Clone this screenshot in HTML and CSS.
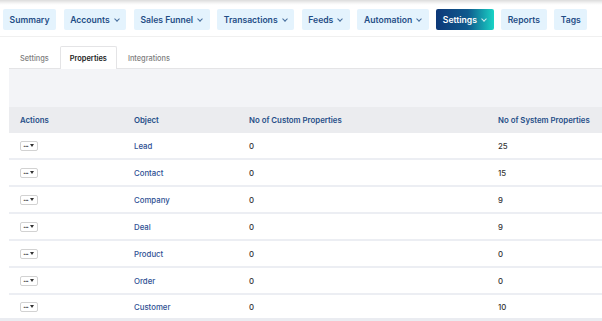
FILE: index.html
```html
<!DOCTYPE html>
<html lang="en">

<head>
    <meta charset="UTF-8">
    <meta name="viewport" content="width=device-width, initial-scale=1.0">
    <title>Settings - Properties</title>
    <link rel="stylesheet" href="styles.css">
</head>

<body>
    <!-- Main navigation -->
    <nav class="top-nav">
        <a class="nav-btn">Summary</a>
        <a class="nav-btn">Accounts <span class="chev"></span></a>
        <a class="nav-btn">Sales Funnel <span class="chev"></span></a>
        <a class="nav-btn">Transactions <span class="chev"></span></a>
        <a class="nav-btn">Feeds <span class="chev"></span></a>
        <a class="nav-btn">Automation <span class="chev"></span></a>
        <a class="nav-btn active">Settings <span class="chev"></span></a>
        <a class="nav-btn">Reports</a>
        <a class="nav-btn">Tags</a>
    </nav>

    <div class="content">
        <div class="tabs">
            <a class="tab">Settings</a>
            <a class="tab current">Properties</a>
            <a class="tab">Integrations</a>
        </div>

        <div class="toolbar"></div>

        <table class="props">
            <thead>
                <tr>
                    <th class="col-actions">Actions</th>
                    <th class="col-object">Object</th>
                    <th class="col-custom">No of Custom Properties</th>
                    <th>No of System Properties</th>
                </tr>
            </thead>
            <tbody>
                <tr>
                    <td><span class="act-btn"><span class="dots">&middot;&middot;&middot;</span><span class="caret"></span></span></td>
                    <td class="obj">Lead</td>
                    <td>0</td>
                    <td>25</td>
                </tr>
                <tr>
                    <td><span class="act-btn"><span class="dots">&middot;&middot;&middot;</span><span class="caret"></span></span></td>
                    <td class="obj">Contact</td>
                    <td>0</td>
                    <td>15</td>
                </tr>
                <tr>
                    <td><span class="act-btn"><span class="dots">&middot;&middot;&middot;</span><span class="caret"></span></span></td>
                    <td class="obj">Company</td>
                    <td>0</td>
                    <td>9</td>
                </tr>
                <tr>
                    <td><span class="act-btn"><span class="dots">&middot;&middot;&middot;</span><span class="caret"></span></span></td>
                    <td class="obj">Deal</td>
                    <td>0</td>
                    <td>9</td>
                </tr>
                <tr>
                    <td><span class="act-btn"><span class="dots">&middot;&middot;&middot;</span><span class="caret"></span></span></td>
                    <td class="obj">Product</td>
                    <td>0</td>
                    <td>0</td>
                </tr>
                <tr>
                    <td><span class="act-btn"><span class="dots">&middot;&middot;&middot;</span><span class="caret"></span></span></td>
                    <td class="obj">Order</td>
                    <td>0</td>
                    <td>0</td>
                </tr>
                <tr>
                    <td><span class="act-btn"><span class="dots">&middot;&middot;&middot;</span><span class="caret"></span></span></td>
                    <td class="obj">Customer</td>
                    <td>0</td>
                    <td>10</td>
                </tr>
            </tbody>
        </table>
    </div>
    <div class="page-foot"></div>
</body>

</html>
```

FILE: styles.css
```css
/* Page base */
body {
    margin: 0;
    padding: 0;
    background: #fff;
    font-family: Inter, "Open Sans", sans-serif;
    color: #333;
    overflow: hidden;
}

/* Top navigation bar */
.top-nav {
    display: flex;
    gap: 7.5px;
    padding: 9px 3px 6px;
    background: linear-gradient(to bottom, #dcdcdc 0, #f4f4f4 3px, #fff 5px);
    border-bottom: 1px solid #f0f0f0;
}

.nav-btn {
    display: flex;
    align-items: center;
    height: 21px;
    padding: 0 6.6px;
    background: #e4f3fd;
    color: #1f4d86;
    font-size: 8.6px;
    font-weight: 600;
    border-radius: 2px;
    white-space: nowrap;
    cursor: pointer;
}

.nav-btn.active {
    background: linear-gradient(90deg, #0d3878 0%, #0f5a8e 55%, #19d3c5 100%);
    color: #fff;
}

/* Small chevron after the dropdown items */
.chev {
    display: inline-block;
    width: 3px;
    height: 3px;
    margin: 0 1px 2px 5px;
    border-right: 1px solid currentColor;
    border-bottom: 1px solid currentColor;
    transform: rotate(45deg);
    opacity: 0.8;
}

/* Settings content */
.content {
    padding-left: 9px;
    padding-top: 9px;
}

.tabs {
    display: flex;
    height: 22px;
    border-bottom: 1px solid #e4e4e6;
}

.tab {
    display: flex;
    align-items: center;
    padding: 0 10px;
    font-size: 7.4px;
    font-weight: 500;
    color: #7d7d7d;
    border: 1px solid transparent;
    border-bottom: none;
    border-radius: 2px 2px 0 0;
    margin-bottom: -1px;
    cursor: pointer;
}

.tab.current {
    color: #222;
    font-weight: 600;
    background: #fff;
    border-color: #e4e4e6;
    padding: 0 9px;
}

.toolbar {
    height: 38px;
    background: #f3f4f7;
}

/* Properties table */
.props {
    width: 100%;
    border-collapse: collapse;
    font-size: 7.8px;
}

.props th {
    height: 26px;
    padding: 0;
    text-align: left;
    background: #ebecef;
    color: #254e88;
    font-weight: 600;
}

.props td {
    height: 25px;
    padding: 0;
    border-bottom: 2px solid #eceef3;
    font-weight: 500;
    color: #333;
}

.props tr:last-child td {
    border-bottom: none;
    height: 23px;
}

.props th:first-child,
.props td:first-child {
    padding-left: 11px;
}

.col-actions {
    width: 114px;
}

.col-object {
    width: 115px;
}

.col-custom {
    width: 249px;
}

.props td.obj {
    color: #2d4f93;
}

/* Actions dropdown button */
.act-btn {
    display: inline-flex;
    align-items: center;
    gap: 2px;
    width: 18px;
    height: 10px;
    box-sizing: border-box;
    padding: 0 2px;
    border: 1px solid #d2d2d2;
    border-radius: 2px;
    background: #fff;
    vertical-align: middle;
}

.dots {
    font-size: 8px;
    line-height: 1;
    color: #222;
    letter-spacing: -1px;
    font-weight: 700;
}

.caret {
    width: 0;
    height: 0;
    border-left: 2px solid transparent;
    border-right: 2px solid transparent;
    border-top: 3px solid #333;
}

.page-foot {
    height: 6px;
    background: #eaecf1;
}
```
